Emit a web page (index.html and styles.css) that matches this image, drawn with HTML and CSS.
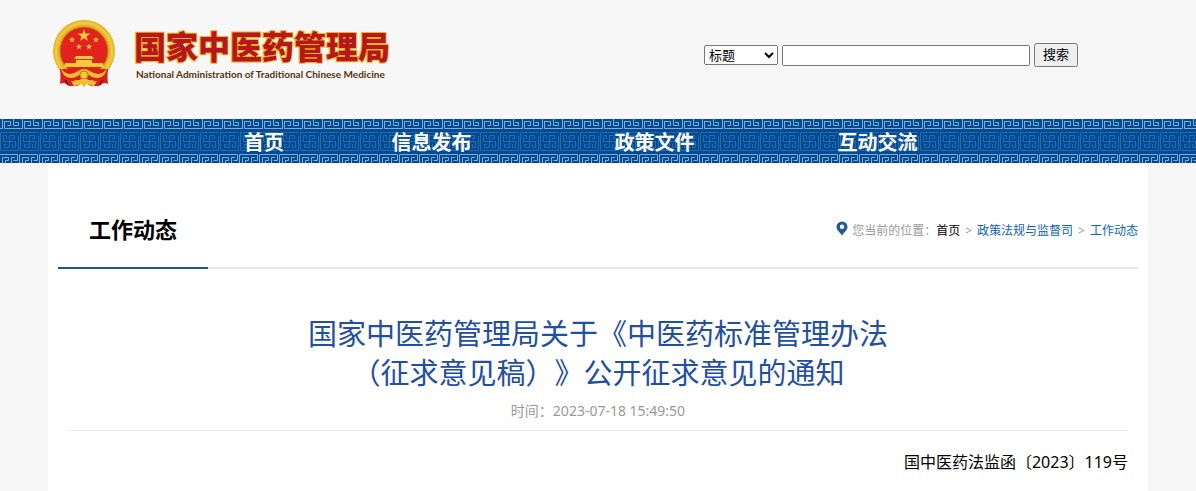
FILE: index.html
```
<!DOCTYPE html>
<html lang="zh-CN">
<head>
  <meta charset="UTF-8" />
  <meta name="viewport" content="width=device-width, initial-scale=1" />
  <title>国家中医药管理局</title>
  <link rel="stylesheet" href="styles.css">
</head>
<body>
  <header class="header wrap">
    <a class="logo" href="#">
      <svg class="emblem" viewBox="0 0 64 68" aria-hidden="true">
        <path d="M10 42 L8 64 Q13 61 17 66 L25 66 L32 62 L39 66 L47 66 Q51 61 56 64 L54 42 Z" fill="#d81e1e"/>
        <path d="M12 51 Q12 59 16 65 M52 51 Q52 59 48 65" stroke="#8f1512" stroke-width="2" fill="none"/>
        <circle cx="32" cy="31" r="31" fill="#e6b32b"/>
        <circle cx="32" cy="31" r="28" fill="none" stroke="#f0c840" stroke-width="3"/>
        <circle cx="32" cy="31" r="24" fill="#e2231d" stroke="#b98213"/>
        <g fill="#f4ca3d">
          <path id="star" d="M32 9 L33.500 13.500 H38.500 L34.500 16.500 L36 21 L32 18.200 L28 21 L29.500 16.500 L25.500 13.500 H30.500 Z"/>
          <use href="#star" transform="translate(4 12) scale(.5)"/>
          <use href="#star" transform="translate(28 12) scale(.5)"/>
          <use href="#star" transform="translate(11 19) scale(.5)"/>
          <use href="#star" transform="translate(21 19) scale(.5)"/>
          <path d="M24 36 H40 L42 39 H22 Z M24 40 H40 V43 H51 L52 47 H12 L13 43 H24 Z"/>
        </g>
        <path d="M8 49 H56 L55 60 H9 Z" fill="#d81e1e"/>
        <path d="M9 48 Q15 58 26 51 Q32 47 38 51 Q49 58 55 48 Q53 61 40 57 Q32 50 24 57 Q11 61 9 48Z" fill="#f0bd2e"/>
        <circle cx="32" cy="55" r="4" fill="#f3c838" stroke="#c28112"/>
        <path d="M19 61 Q26 62 29 59 H35 Q38 62 45 61 L42 66 L35 64 L32 67 L29 64 L22 66Z" fill="#f0c132"/>
      </svg>
      <span class="logo-text">
        <strong class="logo-cn">国家中医药管理局</strong>
        <span class="logo-en">National Administration of Traditional Chinese Medicine</span>
      </span>
    </a>

    <form class="search">
      <select aria-label="搜索范围">
        <option>标题</option>
        <option>正文</option>
      </select>
      <input type="text" aria-label="关键词" />
      <button type="button">搜索</button>
    </form>
  </header>

  <nav class="nav">
    <ul class="nav-list wrap">
      <li><a href="#">首页</a></li>
      <li><a href="#">信息发布</a></li>
      <li><a href="#">政策文件</a></li>
      <li><a href="#">互动交流</a></li>
    </ul>
  </nav>

  <main class="content wrap">
    <div class="section-bar">
      <h2>工作动态</h2>
      <div class="crumbs">
        <svg class="pin" viewBox="0 0 12 15" aria-hidden="true">
          <path fill-rule="evenodd" d="M6 0.500 A5.500 5.500 0 0 1 11.500 6 C11.500 9 8 11.500 6 14.500 C4 11.500 0.500 9 0.500 6 A5.500 5.500 0 0 1 6 0.500 Z M6 3.500 A2.200 2.200 0 1 0 6 7.900 A2.200 2.200 0 1 0 6 3.500 Z" fill="#1f5a94"/>
        </svg>
        <span>您当前的位置：</span><a class="home" href="#">首页</a><span class="sep">&gt;</span><a href="#">政策法规与监督司</a><span class="sep">&gt;</span><a href="#">工作动态</a>
      </div>
    </div>

    <article class="article">
      <h1>国家中医药管理局关于《中医药标准管理办法（征求意见稿）》公开征求意见的通知</h1>
      <p class="time">时间：2023-07-18 15:49:50</p>
      <p class="doc-no">国中医药法监函〔2023〕119号</p>
    </article>
  </main>
</body>
</html>
```
FILE: styles.css
```
* {
  box-sizing: border-box;
}
body {
  margin: 0;
  background: #f7f7f7;
  font-family: "Noto Sans", "Noto Sans CJK SC", sans-serif;
  font-size: 16px;
  color: #000;
  text-spacing-trim: space-all;
}
h1, h2, p, ul {
  margin: 0;
  padding: 0;
}
a {
  text-decoration: none;
}
.wrap {
  max-width: 1100px;
  margin: 0 auto;
}

/* header */
.header {
  display: flex;
  justify-content: space-between;
  align-items: flex-start;
  padding: 20px 70px 31px 4px;
}
.logo {
  display: flex;
  gap: 18px;
}
.emblem {
  width: 64px;
  height: 68px;
}
.logo-text {
  display: flex;
  flex-direction: column;
  padding-top: 5px;
}
.logo-cn {
  font-family: "Noto Sans CJK SC", sans-serif;
  font-size: 32px;
  line-height: 40px;
  font-weight: 900;
  color: #b5171e;
  -webkit-text-stroke: 2px #f3b21b;
  paint-order: stroke fill;
}
.logo-en {
  padding-left: 2px;
  font-family: Lato, sans-serif;
  font-size: 10px;
  line-height: 18px;
  font-weight: bold;
  color: #56330c;
  white-space: nowrap;
}
.search {
  display: flex;
  align-items: center;
  gap: 4px;
  padding-top: 23px;
}
.search select,
.search input,
.search button {
  font-family: "Liberation Sans", "Noto Sans CJK SC", sans-serif;
  font-size: 13px;
}
.search select {
  width: 74px;
  height: 20px;
  padding: 0;
  line-height: 16px;
}
.search input {
  width: 248px;
  height: 21px;
}
.search button {
  height: 24px;
  padding: 0 7px;
  line-height: 20px;
}

/* nav */
.nav {
  background: #004b95 url("data:image/svg+xml,%3Csvg xmlns='http://www.w3.org/2000/svg' width='20' height='44' fill='none' stroke-width='1'%3E%3Cg stroke='%2388acd0'%3E%3Cpath d='M2.500 10V9.500M10.500 6.500H7.500M4.500 2.500H10.500V6.500M4.500 2V9.500H22.500V0M13.500 0V6.500H18.500V3.500H15M2.500 0V9.500H0'/%3E%3Cpath d='M19.500 44V35.500H37M-.5 44V35.500H17.500V41.500H13.500M2.500 44V38.500H8.500V41.500H5.500V44M11.500 44V38.500H15'/%3E%3C/g%3E%3Cg stroke='%232d69a7'%3E%3Cpath d='M.5 31V13.500H18.500M.5 31.500H18.500V17M9.500 16V29M3 22.500H16M9.500 16.500H14.500V19.500H12M9.500 28.500H4.500V25.500H7M3.500 22.500V16.500H6.500V20M15.500 22.500V28.500H12.500V25'/%3E%3C/g%3E%3C/svg%3E") repeat-x;
}
.nav-list {
  display: grid;
  grid-template-columns: 112px 223px 223px 223px;
  padding-left: 160px;
  list-style: none;
}
.nav-list a {
  display: block;
  padding-top: 4px;
  color: #fff;
  font-size: 20px;
  line-height: 40px;
  font-weight: bold;
  text-align: center;
}

/* content */
.content {
  min-height: 328px;
  padding: 28px 10px 16px;
  background: #fff;
}
.section-bar {
  display: flex;
  justify-content: space-between;
  border-bottom: 2px solid #e8e8e8;
}
.section-bar h2 {
  width: 150px;
  margin-bottom: -2px;
  border-bottom: 2px solid #234fa1;
  font-size: 22px;
  line-height: 76px;
  text-align: center;
}
.crumbs {
  display: flex;
  align-items: center;
  padding-top: 2px;
  font-size: 12px;
  color: #999;
}
.crumbs a {
  color: #0d62b8;
}
.crumbs .home {
  color: #000;
}
.sep {
  margin: 0 5px;
}
.pin {
  width: 12px;
  height: 15px;
  margin: 0 4px 4px 0;
}
.article {
  padding: 0 10px;
}
.article h1 {
  max-width: 600px;
  margin: 45px auto 0;
  font-size: 29px;
  line-height: 39px;
  font-weight: normal;
  text-align: center;
  color: #234fa1;
}
.time {
  padding: 2px 0;
  border-bottom: 1px solid #e8e8e8;
  font-size: 14px;
  line-height: 34px;
  text-align: center;
  color: #999;
}
.doc-no {
  margin-top: 15px;
  line-height: 32px;
  text-align: right;
}
```
